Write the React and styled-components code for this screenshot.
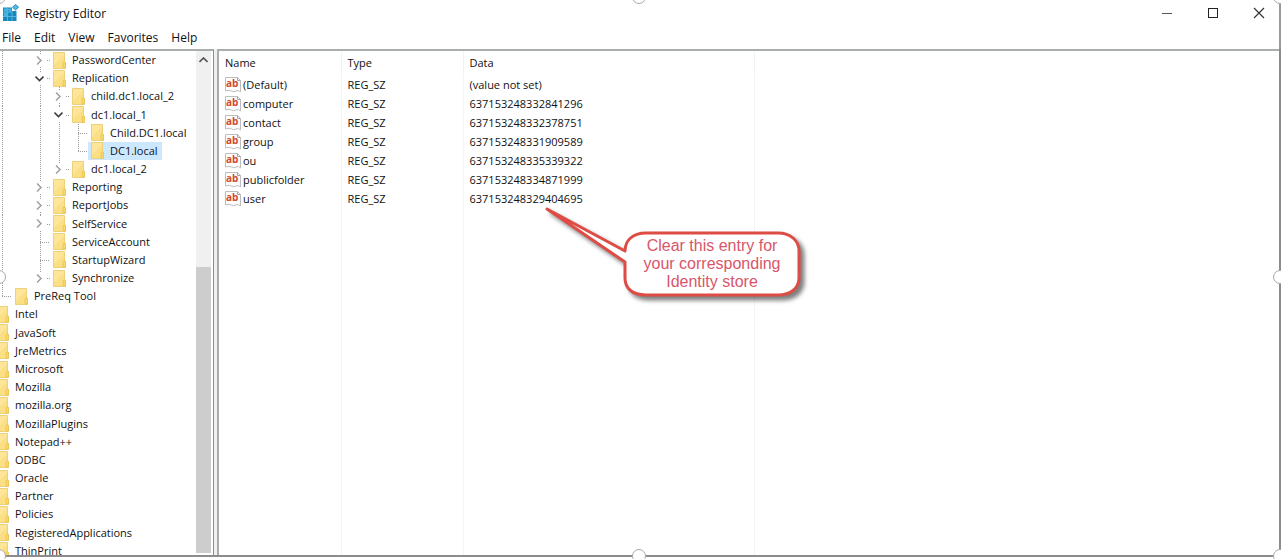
import React, { useState } from 'react';
import styled, { createGlobalStyle } from 'styled-components';

// rails: one letter per indent column
// "|" line, " " empty, "+" tee, "L" last branch, ">" collapsed, "v" expanded, "x" collapsed and last
const keys = [
    { name: 'PasswordCenter', rails: '| >' },
    { name: 'Replication', rails: '| v' },
    { name: 'child.dc1.local_2', rails: '| |>' },
    { name: 'dc1.local_1', rails: '| |v' },
    { name: 'Child.DC1.local', rails: '| ||+' },
    { name: 'DC1.local', rails: '| ||L' },
    { name: 'dc1.local_2', rails: '| |x' },
    { name: 'Reporting', rails: '| >' },
    { name: 'ReportJobs', rails: '| >' },
    { name: 'SelfService', rails: '| >' },
    { name: 'ServiceAccount', rails: '| +' },
    { name: 'StartupWizard', rails: '| +' },
    { name: 'Synchronize', rails: '| x' },
    { name: 'PreReq Tool', rails: 'L' },
    { name: 'Intel', rails: '' },
    { name: 'JavaSoft', rails: '' },
    { name: 'JreMetrics', rails: '' },
    { name: 'Microsoft', rails: '' },
    { name: 'Mozilla', rails: '' },
    { name: 'mozilla.org', rails: '' },
    { name: 'MozillaPlugins', rails: '' },
    { name: 'Notepad++', rails: '' },
    { name: 'ODBC', rails: '' },
    { name: 'Oracle', rails: '' },
    { name: 'Partner', rails: '' },
    { name: 'Policies', rails: '' },
    { name: 'RegisteredApplications', rails: '' },
    { name: 'ThinPrint', rails: '' },
]

const values = [
    { name: '(Default)', data: '(value not set)' },
    { name: 'computer', data: '637153248332841296' },
    { name: 'contact', data: '637153248332378751' },
    { name: 'group', data: '637153248331909589' },
    { name: 'ou', data: '637153248335339322' },
    { name: 'publicfolder', data: '637153248334871999' },
    { name: 'user', data: '637153248329404695' },
]

const RegistryIcon = () => (
    <svg width="16" height="18" viewBox="0 0 16 18" aria-hidden="true">
        <path d="M0 3.5 H9 V7 H13.5 V17 H0 Z" fill="#1787bd" />
        <path d="M1 4.5 H4 V7.5 H1 Z M5.2 4.5 H8.4 V7.5 H5.2 Z M1 8.7 H4 V12 H1 Z" fill="#45b4e0" />
        <path d="M4.6 3.5 V17 M9 7 V17 M0 8.1 H9 M0 12.5 H13.5" stroke="#64bfe4" strokeWidth="0.8" />
        <path d="M12.5 0.5 L15.5 3.2 L12.5 6 L9.6 3.2 Z" fill="#5bbce2" stroke="#1787bd" strokeWidth="1" />
    </svg>
)

const FolderIcon = () => (
    <FolderSvg viewBox="0 0 13 17" aria-hidden="true">
        <path d="M0.5 0.5 H11.5 V10 L12.5 10.5 V16.5 H0.5 Z" fill="#fbdf85" stroke="#efd07a" />
        <path d="M1 1 H11 V3 L1 13 Z" fill="#fde69a" />
        <path d="M11 9.5 L12.5 10.5 V16 H10 V11 Z" fill="#f9d868" stroke="#e6c050" strokeWidth="0.7" />
    </FolderSvg>
)

const StringIcon = () => (
    <svg width="17" height="16" viewBox="0 0 17 16" aria-hidden="true">
        <path d="M0.5 0.5 H12.5 L15.5 3.5 V15 Q13.5 12.5 11 14 T6.5 14 T0.5 14 Z" fill="#fdfdfd" stroke="#bdbdbd" />
        <path d="M12.5 0.5 V3.5 H15.5" fill="none" stroke="#a5a5a5" />
        <text x="1" y="10" fontFamily="Open Sans, sans-serif" fontSize="10" fontWeight="700" fill="#d2492c">ab</text>
    </svg>
)

const Chevron = ({ open }) => (
    <svg width="9" height="9" viewBox="0 0 9 9" fill="none" aria-hidden="true">
        {open
            ? <path d="M0.5 2.5 L4.5 6.5 L8.5 2.5" stroke="#404040" strokeWidth="1.6" />
            : <path d="M2 0.5 L6 4.5 L2 8.5" stroke="#a0a0a0" strokeWidth="1.5" />}
    </svg>
)

const Rail = ({ type, name }) => {
    const expander = 'v>x'.includes(type)
    return (
        <RailCell $type={type}>
            {expander && (
                <Expander aria-label={`${type === 'v' ? 'Collapse' : 'Expand'} ${name}`}>
                    <Chevron open={type === 'v'} />
                </Expander>
            )}
        </RailCell>
    )
}

const Callout = () => (
    <CalloutBox>
        <svg width="270" height="106" viewBox="0 0 270 106" aria-hidden="true">
            <path
                d="M5 6 L83 48 C83 38 90 30 104 30 H236 C249 30 257 38 257 48 V75 C257 85 249 92 236 92 H104 C90 92 83 85 83 75 V59 Z"
                fill="#ffffff"
                stroke="#dd4c45"
                strokeWidth="3"
                strokeLinejoin="round"
            />
        </svg>
        <CalloutText>Clear this entry for<br />your corresponding<br />Identity store</CalloutText>
    </CalloutBox>
)

const App = () => {
    const [selected, setSelected] = useState('DC1.local')

    return (
        <Window>
            <GlobalStyle />
            <TitleBar>
                <RegistryIcon />
                <Title>Registry Editor</Title>
                <Controls>
                    <ControlButton aria-label="Minimize">
                        <svg width="12" height="12"><path d="M1 6.5 H11" stroke="#555" /></svg>
                    </ControlButton>
                    <ControlButton aria-label="Maximize">
                        <svg width="12" height="12"><rect x="1.5" y="1.5" width="9" height="9" fill="none" stroke="#222" /></svg>
                    </ControlButton>
                    <ControlButton aria-label="Close">
                        <svg width="12" height="12"><path d="M1 1 L11 11 M11 1 L1 11" stroke="#333" strokeWidth="1.2" /></svg>
                    </ControlButton>
                </Controls>
            </TitleBar>
            <MenuBar>
                {['File', 'Edit', 'View', 'Favorites', 'Help'].map(item => <MenuButton key={item}>{item}</MenuButton>)}
            </MenuBar>
            <Panes>
                <TreePane>
                    <Tree>
                        {keys.map(key => (
                            <TreeRow key={key.name}>
                                {key.rails.split('').map((type, i) => <Rail key={i} type={type} name={key.name} />)}
                                <KeyButton $selected={selected === key.name} onClick={() => setSelected(key.name)}>
                                    <FolderIcon />
                                    <span>{key.name}</span>
                                </KeyButton>
                            </TreeRow>
                        ))}
                    </Tree>
                    <ScrollBar>
                        <ScrollUp aria-label="Scroll up">
                            <svg width="9" height="6" fill="none"><path d="M0.5 5 L4.5 1 L8.5 5" stroke="#505050" strokeWidth="1.6" /></svg>
                        </ScrollUp>
                        <ScrollThumb />
                    </ScrollBar>
                </TreePane>
                <ListPane>
                    <ValueTable>
                        <colgroup>
                            <Col $width="122px" />
                            <Col $width="122px" />
                            <Col $width="291px" />
                            <col />
                        </colgroup>
                        <thead>
                            <tr>
                                <Th>Name</Th>
                                <Th>Type</Th>
                                <Th>Data</Th>
                                <td />
                            </tr>
                        </thead>
                        <tbody>
                            {values.map(value => (
                                <tr key={value.name}>
                                    <Td>
                                        <ValueName><StringIcon />{value.name}</ValueName>
                                    </Td>
                                    <Td>REG_SZ</Td>
                                    <Td>{value.data}</Td>
                                    <td />
                                </tr>
                            ))}
                            <FillerRow>
                                <Td />
                                <Td />
                                <Td />
                                <td />
                            </FillerRow>
                        </tbody>
                    </ValueTable>
                    <Callout />
                </ListPane>
            </Panes>
            <Handle $x="left" $y="top" />
            <Handle $x="center" $y="top" />
            <Handle $x="right" $y="top" />
            <Handle $x="left" $y="middle" />
            <Handle $x="right" $y="middle" />
            <Handle $x="left" $y="bottom" />
            <Handle $x="center" $y="bottom" />
            <Handle $x="right" $y="bottom" />
        </Window>
    );
};

const GlobalStyle = createGlobalStyle`
    * {
        box-sizing: border-box;
    }
    body {
        margin: 0;
        background: #ffffff;
        font-family: 'Open Sans', 'Noto Sans', sans-serif;
        font-size: 11px;
        color: #111111;
    }
    button {
        margin: 0;
        padding: 0;
        border: none;
        background: none;
        font: inherit;
        color: inherit;
    }
    svg {
        flex: none;
    }
`

const Window = styled.div`
    position: relative;
    display: flex;
    flex-direction: column;
    height: 100vh;
    padding-bottom: 2px;
    overflow: hidden;
`

const TitleBar = styled.header`
    display: flex;
    align-items: center;
    height: 26px;
    padding-left: 3px;
    border-right: 2px solid #9a9a9a;
`

const Title = styled.h1`
    flex: 1;
    margin: 0 0 0 6px;
    font-size: 12px;
    font-weight: 400;
`

const Controls = styled.div`
    display: flex;
    gap: 6px;
`

const ControlButton = styled.button`
    display: flex;
    align-items: center;
    justify-content: center;
    width: 40px;
    height: 24px;
`

const MenuBar = styled.nav`
    display: flex;
    align-items: center;
    gap: 13px;
    height: 23px;
    padding-left: 2px;
    border-right: 2px solid #9a9a9a;
`

const MenuButton = styled.button`
    font-size: 12px;
    line-height: 18px;
`

const Panes = styled.main`
    display: flex;
    flex: 1;
    min-height: 0;
    gap: 3px;
    background: #f0f0f0;
    border-right: 2px solid #8c8c8c;
    border-bottom: 2px solid #8c8c8c;
`

const TreePane = styled.section`
    display: flex;
    flex: none;
    width: 214px;
    padding-right: 2px;
    overflow: hidden;
    background: #ffffff;
    border-top: 2px solid #a9adab;
    border-right: 1px solid #8c8c8c;
`

const Tree = styled.ul`
    display: flex;
    flex: 1;
    flex-direction: column;
    margin: 0 0 -5px -7px;
    padding: 0;
    list-style: none;
`

const TreeRow = styled.li`
    display: flex;
    flex: 1;
    align-items: stretch;
    line-height: 18px;
    white-space: nowrap;
`

const dots = '#9c9c9c 0 1px, transparent 1px 2px'
const vertical = height => `repeating-linear-gradient(${dots}) 9px 0 / 1px ${height} no-repeat`
const horizontal = left => `repeating-linear-gradient(90deg, ${dots}) ${left} 9px / 100% 1px no-repeat`

const railBackground = {
    ' ': 'none',
    '|': vertical('100%'),
    '+': `${vertical('100%')}, ${horizontal('9px')}`,
    'L': `${vertical('50%')}, ${horizontal('9px')}`,
    '>': `${vertical('100%')}, ${horizontal('16px')}`,
    'v': `${vertical('100%')}, ${horizontal('16px')}`,
    'x': `${vertical('50%')}, ${horizontal('16px')}`,
}

const RailCell = styled.span`
    display: flex;
    align-items: center;
    width: 19px;
    background: ${props => railBackground[props.$type]};
`

const Expander = styled.button`
    display: flex;
    align-items: center;
    justify-content: center;
    width: 13px;
    height: 13px;
    margin-left: 2px;
    background: #ffffff;
`

const KeyButton = styled.button`
    display: flex;
    align-items: center;
    gap: 6px;
    padding: 0 4px 0 3px;
    background: ${props => props.$selected ? '#cce8ff' : 'transparent'};
`

const FolderSvg = styled.svg`
    width: 13px;
    height: 17px;
`

const ScrollBar = styled.div`
    display: flex;
    flex: none;
    flex-direction: column;
    width: 15px;
    margin-bottom: 2px;
    background: #f0f0f0;
`

const ScrollUp = styled.button`
    display: flex;
    justify-content: center;
    flex: 210;
    padding-top: 6px;
`

const ScrollThumb = styled.div`
    flex: 285;
    background: #cdcdcd;
`

const ListPane = styled.section`
    position: relative;
    flex: 1;
    background: #ffffff;
    border-top: 2px solid #a9adab;
    border-left: 2px solid #a9adab;
`

const ValueTable = styled.table`
    width: 100%;
    height: 100%;
    table-layout: fixed;
    border-collapse: collapse;
`

const Col = styled.col`
    width: ${props => props.$width};
`

const Th = styled.th`
    height: 24px;
    padding: 0 0 2px 6px;
    border-right: 1px solid #f0f2f3;
    font-weight: 400;
    text-align: left;
`

const Td = styled.td`
    height: 19px;
    padding: 0 0 0 6px;
    border-right: 1px solid #f3f5f6;
    line-height: 18px;
`

const ValueName = styled.span`
    display: flex;
    align-items: center;
    gap: 1px;
`

const FillerRow = styled.tr`
    height: 100%;
`

const CalloutBox = styled.aside`
    position: absolute;
    top: 152px;
    left: 323px;
    color: #d9566a;

    svg {
        display: block;
        overflow: visible;
        filter: drop-shadow(4px 4px 2px rgba(0, 0, 0, 0.5));
    }
`

const CalloutText = styled.p`
    position: absolute;
    top: 34px;
    left: 83px;
    width: 174px;
    margin: 0;
    font-family: 'Liberation Sans', Arial, sans-serif;
    font-size: 16px;
    line-height: 18px;
    text-align: center;
`

const handleX = {
    left: 'left: -8px;',
    center: 'left: calc(50% - 9px);',
    right: 'right: -6px;',
}

const handleY = {
    top: 'top: -10px;',
    middle: 'top: calc(50% - 10px);',
    bottom: 'bottom: -4px;',
}

const Handle = styled.span`
    position: absolute;
    width: 14px;
    height: 14px;
    ${props => handleX[props.$x]}
    ${props => handleY[props.$y]}
    background: #ffffff;
    border: 1px solid #a8a8a8;
    border-radius: 50%;
`

export default App;
